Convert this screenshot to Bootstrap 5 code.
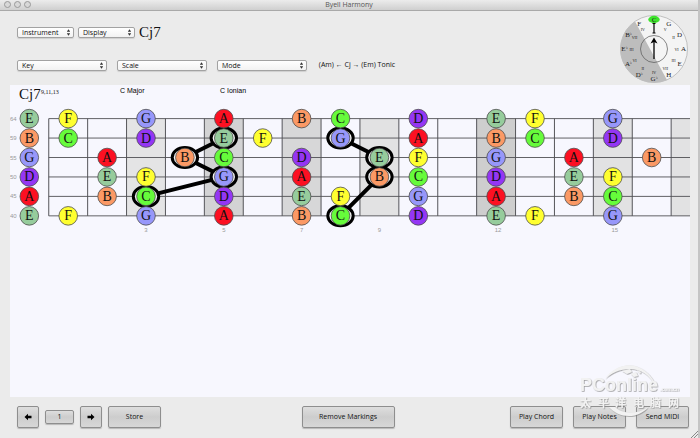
<!DOCTYPE html>
<html lang="en">
<head>
<meta charset="utf-8">
<meta name="viewport" content="width=device-width, initial-scale=1">
<title>Byell Harmony</title>
<link rel="stylesheet" href="https://cdn.jsdelivr.net/npm/bootstrap@5.3.0/dist/css/bootstrap.min.css">
<style>
  body { background: #ebebeb; color: #111; font-family: "Open Sans", "Noto Sans", sans-serif; font-size: 7px; line-height: 10px; font-weight: 500; }
  .app-window { border-right: 2px solid #c4c4c4; }
  .title-bar { height: 11px; background: linear-gradient(#ececec, #cfcfcf); border-bottom: 1px solid #a9a9a9; color: #555; }
  .title-bar h1 { font-size: 7px; line-height: 10px; font-weight: 500; }
  .lights { left: 4px; top: 1px; gap: 3px; }
  .light { width: 7px; height: 7px; border: 1px solid #999; border-radius: 50%; background: #d8d8d8; }
  .tool-area { padding: 3px 9px 1px 17px; }
  .tool-rows { padding-top: 10px; gap: 17px; }
  .tool-row { height: 16px; }
  .popup { appearance: none; height: 11px; padding: 0 4px; border: 1px solid #a2a2a2; border-radius: 2px; color: #111; font-size: 7px; line-height: 9px; font-weight: 500; box-shadow: 0 1px 1px #cfcfcf;
    background: url("data:image/svg+xml,%3Csvg xmlns='http://www.w3.org/2000/svg' width='5' height='7' viewBox='0 0 5 7'%3E%3Cpath d='M.8 2.7 2.5.3 4.2 2.7zM.8 4.3 2.5 6.7 4.2 4.3z' fill='%23333'/%3E%3C/svg%3E") no-repeat right 2px center, linear-gradient(#fff, #f2f2f2); }
  .popup-sm { width: 57px; }
  .popup-lg { width: 90px; }
  .chord-name { font-family: "Liberation Serif", serif; font-size: 15px; line-height: 16px; color: #111; }
  .gap-small { gap: 4px; }
  .gap-wide { gap: 10px; }
  .dial { width: 70px; height: 70px; }
  .dial, .board { font-family: "Liberation Serif", serif; }
  .board-panel { background: #f7f7fe; margin: 0 8px 0 10px; }
  .board .plain { font-family: "Liberation Sans", sans-serif; font-size: 7px; }
  .board .faint { font-family: "Liberation Sans", sans-serif; font-size: 6px; fill: #999; }
  .board .note { font-size: 14px; text-anchor: middle; fill: #111; }
  .action-bar { padding: 9px 9px 10px 17px; }
  .push { height: 22px; padding: 0; border: 1px solid #8e8e8e; border-radius: 2px; background: linear-gradient(#dedede, #cdcdcd 50%, #d7d7d7); color: #111; font-size: 7px; line-height: 10px; font-weight: 500; box-shadow: 0 1px 1px #b8b8b8; }
  .push-arrow { width: 22px; }
  .push-text { width: 53px; }
  .push-wide { width: 93px; }
  .page-no { width: 29px; height: 14px; }
  .page-gap { gap: 6px; }
  .center-action { padding-right: 10px; }
  .sites { width: 112px; height: 56px; right: 6px; bottom: 18px; pointer-events: none; }
</style>
<script src="https://cdn.jsdelivr.net/npm/bootstrap@5.3.0/dist/js/bootstrap.bundle.min.js"></script>
</head>
<body>
<div class="app-window d-flex flex-column min-vh-100 position-relative">
  <header class="title-bar position-relative text-center">
    <div class="lights position-absolute d-flex" aria-hidden="true"><span class="light"></span><span class="light"></span><span class="light"></span></div>
    <h1 class="m-0">Byell Harmony</h1>
  </header>

  <section class="tool-area d-flex justify-content-between align-items-start">
    <div class="tool-rows d-flex flex-column">
      <div class="tool-row d-flex align-items-center gap-small">
        <select class="popup popup-sm" aria-label="Instrument"><option>Instrument</option></select>
        <select class="popup popup-sm" aria-label="Display"><option>Display</option></select>
        <span class="chord-name">Cj7</span>
      </div>
      <div class="tool-row d-flex align-items-center gap-wide">
        <select class="popup popup-lg" aria-label="Key"><option>Key</option></select>
        <select class="popup popup-lg" aria-label="Scale"><option>Scale</option></select>
        <select class="popup popup-lg" aria-label="Mode"><option>Mode</option></select>
        <span>&nbsp;(Am) ← Cj → (Em) Tonic</span>
      </div>
    </div>
    <svg class="dial flex-shrink-0" viewBox="-35 -35 70 70" role="img" aria-label="Circle of fifths">
      <circle r="33.5" fill="#f4f4f4" stroke="#aaa" stroke-width=".7"/>
      <path d="M-19 -27.6A33.5 33.5 0 0 0 13 30.9Z" fill="#bdbdbd"/>
      <circle r="13.5" fill="none" stroke="#555" stroke-width=".7"/>
      <ellipse cx="0" cy="-29.5" rx="5.7" ry="3.7" fill="#3de42b"/>
      <path d="M0 10V-9" stroke="#000" stroke-width="1.3"/><path d="M-3.5-5.5 0-11.5 3.5-5.5 0-7Z"/>
      <path d="M0-25.5V-16M-1.5-25.5H1.5M-1.5-16H1.5" stroke="#000" stroke-width="1.2"/>
      <g id="dialText" text-anchor="middle" fill="#222"></g>
    </svg>
  </section>

  <main class="board-panel flex-grow-1">
    <svg class="board d-block w-100" viewBox="0 0 680 152" role="img" aria-label="Fretboard">
      <text x="9" y="14" font-size="15" fill="#111">Cj7</text>
      <text x="31" y="9" font-size="6" fill="#111">9,11,13</text>
      <text class="plain" x="110" y="8">C Major</text>
      <text class="plain" x="210" y="8">C Ionian</text>
      <g id="neck"></g>
    </svg>
  </main>

  <footer class="action-bar">
    <div class="row g-0 align-items-center">
      <div class="col d-flex align-items-center page-gap">
        <button class="push push-arrow" type="button" aria-label="Previous"><svg width="8" height="8" viewBox="0 0 8 8"><path d="M.5 4 4 .7V2.700H7.500V5.300H4V7.300Z"/></svg></button>
        <button class="push page-no" type="button">1</button>
        <button class="push push-arrow" type="button" aria-label="Next"><svg width="8" height="8" viewBox="0 0 8 8"><path d="M7.500 4 4 .7V2.700H.5V5.300H4V7.300Z"/></svg></button>
        <button class="push push-text" type="button">Store</button>
      </div>
      <div class="col-auto center-action"><button class="push push-wide" type="button">Remove Markings</button></div>
      <div class="col d-flex justify-content-end gap-wide">
        <button class="push push-text" type="button">Play Chord</button>
        <button class="push push-text" type="button">Play Notes</button>
        <button class="push push-text" type="button">Send MIDI</button>
      </div>
    </div>
  </footer>

  <svg class="sites position-absolute" viewBox="0 0 112 56" aria-hidden="true">
    <defs><filter id="emboss" x="-10%" y="-10%" width="120%" height="120%"><feDropShadow dx=".7" dy=".7" stdDeviation=".5" flood-color="#777" flood-opacity=".75"/></filter></defs>
    <g filter="url(#emboss)" fill="#f2f2f2">
      <path d="M25 15C33 2 50-3 62 5 70 10 75 17 76 23 70 11 61 5 50 5 40 5 31 9 25 15Z"/>
      <path d="M29 43C38 54 58 56 68 43 59 50 43 51 35 43Z"/>
      <path d="M42 7 50 5 52 8 47 10ZM51 10 56 8 58 12 54 13ZM57 6 61 8 60 10Z"/>
      <text x="0" y="27" font-family="Liberation Sans, sans-serif" font-weight="700" font-size="18">PConline</text>
      <text x="80" y="27" font-family="Liberation Sans, sans-serif" font-weight="700" font-size="5">.com.cn</text>
      <g font-family="Noto Sans CJK SC, sans-serif" font-weight="700" font-size="11"><text x="0" y="43">太</text><text x="18" y="43">平</text><text x="35" y="43">洋</text><text x="53" y="43">电</text><text x="70" y="43">脑</text><text x="88" y="43">网</text></g>
    </g>
  </svg>
  <svg class="position-absolute bottom-0 end-0" width="8" height="8" viewBox="0 0 8 8" aria-hidden="true"><path d="M1 8 8 1M4 8 8 4" stroke="#888"/></svg>
</div>

<script>
  const FRET = 38.9, STRING = 19.45;
  const noteX = fret => 19.3 + fret * FRET;
  const stringY = row => 33.6 + row * STRING;
  const colors = { E: '#96cc9c', F: '#ffff30', G: '#9797fa', A: '#fc1022', B: '#fb9965', C: '#66fb3b', D: '#9436f4' };
  const strings = [
    [64, '0E 1F 3G 5A 7B 8C 10D 12E 13F 15G'],
    [59, '0B 1C 3D 5E 6F 8G 10A 12B 13C 15D'],
    [55, '0G 2A 4B 5C 7D 9E 10F 12G 14A 16B'],
    [50, '0D 2E 3F 5G 7A 9B 10C 12D 14E 15F'],
    [45, '0A 2B 3C 5D 7E 8F 10G 12A 14B 15C'],
    [40, '0E 1F 3G 5A 7B 8C 10D 12E 13F 15G']
  ];
  const shades = { 3: '#e4e4e5', 5: '#d3d3d4', 7: '#d7d7d8', 9: '#e2e2e3', 12: '#cecece', 15: '#e2e2e3', 17: '#e2e2e3' };
  const phrases = [[[3, 4], [5, 3], [4, 2], [5, 1]], [[8, 1], [9, 2], [9, 3], [8, 5]]];
  const neckTop = stringY(0), neckBottom = stringY(5);
  let neck = '';
  for (const [fret, shade] of Object.entries(shades)) {
    neck += `<rect x="${noteX(fret) - FRET / 2}" y="${neckTop}" width="${FRET}" height="${neckBottom - neckTop}" fill="${shade}"/>`;
    if (fret < 17) neck += `<text class="faint" text-anchor="middle" x="${noteX(+fret) + (fret > 9 ? 2 : 0)}" y="147">${fret}</text>`;
  }
  for (let fret = 0; fret <= 16; fret++)
    neck += `<path d="M${noteX(fret) + FRET / 2} ${neckTop}V${neckBottom}" stroke="#55555a"/>`;
  strings.forEach(([midi], row) => {
    neck += `<path d="M${noteX(0.5)} ${stringY(row)}H680" stroke="#505055" stroke-width=".9"/><text class="faint" x="0" y="${stringY(row) + 2}">${midi}</text>`;
  });
  for (const phrase of phrases) {
    const points = phrase.map(([fret, row]) => [noteX(fret), stringY(row)]);
    neck += `<polyline points="${points.join(' ')}" fill="none" stroke="#000" stroke-width="4"/>`;
    for (const [x, y] of points) neck += `<ellipse cx="${x}" cy="${y}" rx="12.7" ry="10" fill="#f0f0f0" stroke="#000" stroke-width="3"/>`;
  }
  strings.forEach(([, notes], row) => {
    for (const item of notes.split(' ')) {
      const fret = parseInt(item, 10), name = item.slice(-1);
      neck += `<circle cx="${noteX(fret)}" cy="${stringY(row)}" r="9.3" fill="${colors[name]}" stroke="#4c4c4c" stroke-width=".8"/><text class="note" x="${noteX(fret)}" y="${stringY(row) + 4.5}">${name}</text>`;
    }
  });
  document.getElementById('neck').innerHTML = neck;

  const keys = ['C', 'G', 'D', 'A', 'E', 'H', 'G♭', 'D♭', 'A♭', 'E♭', 'B♭', 'F'];
  const degrees = ['', 'V', 'II', 'VI', 'III', 'VII', 'IV', 'II', 'VI', 'III', 'VII', 'IV'];
  document.getElementById('dialText').innerHTML = keys.map((key, i) => {
    const a = i * Math.PI / 6, sx = Math.sin(a), cy = -Math.cos(a);
    const name = key[0] + (key[1] ? '<tspan font-size="4" dy="-2">♭</tspan>' : '');
    const degree = degrees[i] ? `<text font-size="4" x="${22.5 * sx}" y="${23 * cy + 1.5}">${degrees[i]}</text>` : '';
    return `<text font-size="7" x="${29.5 * sx}" y="${29.5 * cy + 2.4}">${name}</text>${degree}`;
  }).join('');
</script>
</body>
</html>
